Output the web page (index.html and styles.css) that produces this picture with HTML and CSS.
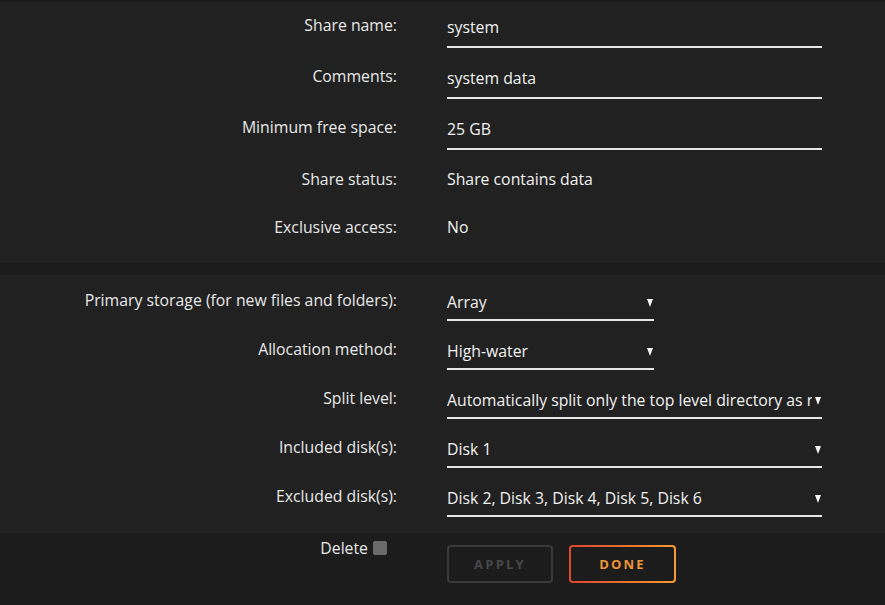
FILE: index.html
```html
<!DOCTYPE html>
<html lang="en">
<head>
  <meta charset="UTF-8">
  <title>Share settings</title>
  <link rel="stylesheet" href="styles.css">
</head>
<body>

  <div class="section first">
    <div class="row">
      <span class="label">Share name:</span>
      <input class="field" type="text" value="system">
    </div>
    <div class="row">
      <span class="label">Comments:</span>
      <input class="field" type="text" value="system data">
    </div>
    <div class="row">
      <span class="label">Minimum free space:</span>
      <input class="field" type="text" value="25 GB">
    </div>
    <div class="row plain">
      <span class="label">Share status:</span>
      <span class="value">Share contains data</span>
    </div>
    <div class="row plain">
      <span class="label">Exclusive access:</span>
      <span class="value">No</span>
    </div>
  </div>

  <div class="divider"></div>

  <div class="section second">
    <div class="row">
      <span class="label">Primary storage (for new files and folders):</span>
      <div class="select short"><span class="text">Array</span></div>
    </div>
    <div class="row">
      <span class="label">Allocation method:</span>
      <div class="select short"><span class="text">High-water</span></div>
    </div>
    <div class="row">
      <span class="label">Split level:</span>
      <div class="select"><span class="text">Automatically split only the top level directory as required</span></div>
    </div>
    <div class="row">
      <span class="label">Included disk(s):</span>
      <div class="select"><span class="text">Disk 1</span></div>
    </div>
    <div class="row">
      <span class="label">Excluded disk(s):</span>
      <div class="select"><span class="text">Disk 2, Disk 3, Disk 4, Disk 5, Disk 6</span></div>
    </div>
  </div>

  <div class="footer">
    <div class="delete">
      <span>Delete</span>
      <span class="checkbox"></span>
    </div>
    <div class="buttons">
      <button class="btn apply" disabled>APPLY</button>
      <button class="btn done">DONE</button>
    </div>
  </div>

</body>
</html>
```

FILE: styles.css
```css
* {
  margin: 0;
  padding: 0;
  box-sizing: border-box;
}

body {
  background: #212121;
  color: #e8e8e8;
  font-family: 'Open Sans', 'Noto Sans', sans-serif;
  font-size: 15.8px;
  line-height: 20px;
}

.section.first {
  padding: 13px 0 19px;
  border-top: 2px solid #1c1c1c;
}

.section.second {
  padding: 15px 0 16px;
}

.divider {
  height: 12px;
  background: #1c1c1c;
}

.row {
  display: grid;
  grid-template-columns: 397px 375px;
  column-gap: 50px;
  align-items: start;
  margin-bottom: 18px;
}

.row.plain {
  padding: 1px 0 7px;
  margin-bottom: 20px;
}

.section .row:last-child {
  margin-bottom: 0;
}

.label {
  text-align: right;
}

.value {
  color: #f2f2f2;
}

.field {
  width: 375px;
  font: inherit;
  color: #f2f2f2;
  background: transparent;
  border: none;
  border-bottom: 2px solid #e6e6e6;
  padding: 2px 0 9px;
  outline: none;
}

.select {
  position: relative;
  width: 375px;
  padding: 2px 10px 7px 0;
  border-bottom: 2px solid #e6e6e6;
  color: #f2f2f2;
  white-space: nowrap;
  overflow: hidden;
}

.select.short {
  width: 207px;
}

.select .text {
  display: block;
  overflow: hidden;
}

.select::after {
  content: "";
  position: absolute;
  right: 1px;
  top: 9px;
  border-left: 3.5px solid transparent;
  border-right: 3.5px solid transparent;
  border-top: 8px solid #f4f4f4;
}

.footer {
  background: #1c1c1c;
  height: 72px;
  display: grid;
  grid-template-columns: 397px auto;
  column-gap: 50px;
  padding-top: 5px;
}

.delete {
  display: flex;
  justify-content: flex-end;
  align-items: center;
  gap: 5px;
  height: 20px;
  padding-right: 10px;
}

.checkbox {
  width: 14px;
  height: 14px;
  border-radius: 2px;
  background: #6b6b6b;
}

.buttons {
  display: flex;
  gap: 16px;
  padding-top: 7px;
}

.btn {
  height: 38px;
  width: 106px;
  border-radius: 4px;
  font-family: 'Open Sans', sans-serif;
  font-weight: bold;
  font-size: 13px;
  letter-spacing: 2.2px;
  background: #1c1c1c;
}

.btn.apply {
  border: 2px solid #3a3a3a;
  color: #474747;
}

.btn.done {
  width: 107px;
  color: #ee9439;
  border: 2px solid transparent;
  background: linear-gradient(#1c1c1c, #1c1c1c) padding-box,
              linear-gradient(90deg, #e0452b, #f29a33) border-box;
  cursor: pointer;
}
```
